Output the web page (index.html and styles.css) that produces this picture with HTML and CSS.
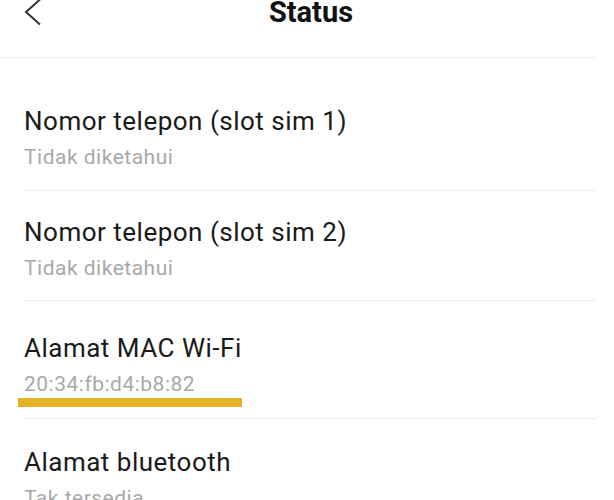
FILE: index.html
```html
<!DOCTYPE html>
<html lang="id">
<head>
    <meta charset="UTF-8">
    <meta name="viewport" content="width=device-width, initial-scale=1.0">
    <title>Status</title>
    <link rel="stylesheet" href="styles.css">
</head>
<body>
    <div class="page">
        <header class="topbar">
            <svg class="back" width="20" height="27" viewBox="0 0 20 27" aria-hidden="true">
                <path d="M18 0.5 L4 13 L18 25.5" fill="none" stroke="#333" stroke-width="2"/>
            </svg>
            <h1>Status</h1>
        </header>

        <ul class="status-list">
            <li class="item item-first">
                <div class="item-title">Nomor telepon (slot sim 1)</div>
                <div class="item-value">Tidak diketahui</div>
            </li>
            <li class="item">
                <div class="item-title">Nomor telepon (slot sim 2)</div>
                <div class="item-value">Tidak diketahui</div>
            </li>
            <li class="item item-marked">
                <div class="item-title">Alamat MAC Wi-Fi</div>
                <div class="item-value">20:34:fb:d4:b8:82</div>
                <div class="marker"></div>
            </li>
            <li class="item item-last">
                <div class="item-title">Alamat bluetooth</div>
                <div class="item-value">Tak tersedia</div>
            </li>
        </ul>
    </div>
</body>
</html>
```

FILE: styles.css
```css
/* General */
body {
    margin: 0;
    background-color: #ffffff;
    font-family: Roboto, "Noto Sans", sans-serif;
    color: #1a1a1a;
    overflow: hidden;
}

.page {
    width: 596px;
}

/* Barra superior */
.topbar {
    display: flex;
    align-items: flex-start;
    height: 57px;
    padding-left: 22px;
    border-bottom: 1px solid #ececec;
}

.back {
    display: block;
    margin-top: -1px;
}

.topbar h1 {
    flex: 1;
    margin: 0;
    padding-right: 16px;
    text-align: center;
    font-size: 29px;
    font-weight: bold;
    line-height: 24px;
    color: #111;
}

/* Lista */
.status-list {
    list-style: none;
    margin: 0;
    padding: 0;
}

.item {
    margin-left: 24px;
    padding: 26px 0 20px;
    border-bottom: 1px solid #ececec;
}

.item-first {
    padding-top: 48px;
    padding-bottom: 21px;
}

.item-last {
    padding-top: 28px;
}

.item-title {
    font-size: 26px;
    line-height: 30px;
    letter-spacing: 0.5px;
    color: #1a1a1a;
}

.item-value {
    margin-top: 9px;
    font-size: 21px;
    line-height: 24px;
    letter-spacing: 0.5px;
    color: #a9a9a9;
}

.item-marked {
    padding-top: 32px;
    padding-bottom: 11px;
}

.marker {
    width: 224px;
    height: 9px;
    margin: 2px 0 0 -6px;
    background-color: #e4b226;
}
```
